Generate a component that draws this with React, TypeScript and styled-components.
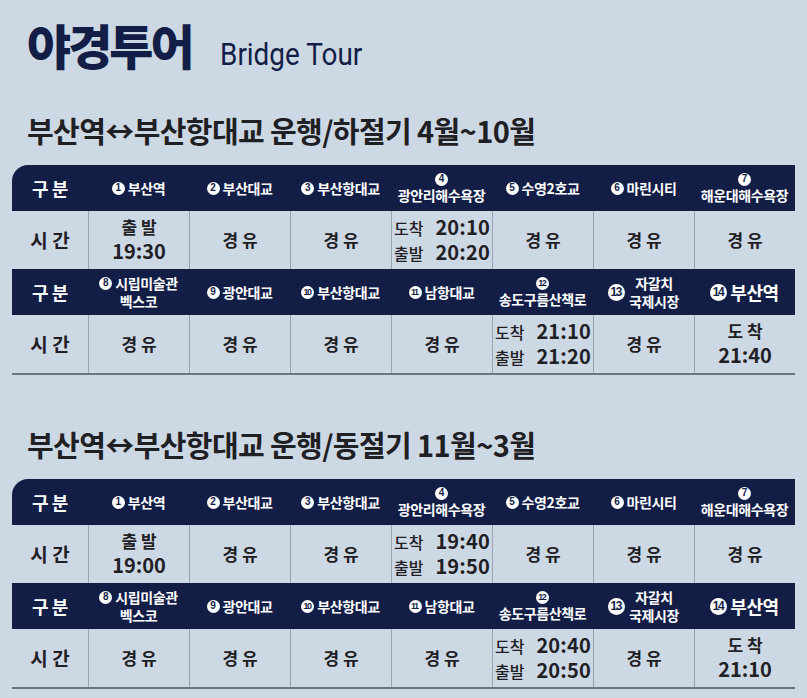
import React from "react";
import styled, { createGlobalStyle } from "styled-components";

const NAVY = "#131e47";
const INK = "#1f2024";

const GlobalStyle = createGlobalStyle`
  html, body {
    margin: 0;
    padding: 0;
    background: #cdd8e5;
  }
  body {
    font-family: "Noto Sans CJK KR", "Noto Sans", sans-serif;
    color: ${INK};
  }
`;

const Page = styled.div`
  width: 807px;
  height: 698px;
  overflow: hidden;
  box-sizing: border-box;
  padding: 14px 0 0 12px;
  background: #cdd8e5;
`;

const TitleRow = styled.div`
  display: flex;
  align-items: baseline;
  gap: 28px;
  padding-left: 15px;
  height: 66px;
  color: ${NAVY};
`;

const TitleKo = styled.h1`
  margin: 0;
  font-size: 48px;
  line-height: 60px;
  font-weight: 900;
  letter-spacing: -3px;
`;

const TitleEn = styled.span`
  display: inline-block;
  font-family: "Liberation Sans Narrow", "Roboto", sans-serif;
  font-size: 31px;
  font-weight: 400;
  transform: scaleX(0.9);
  transform-origin: left center;
`;

const Section = styled.section<{ $gap: number }>`
  margin-top: ${(p) => p.$gap}px;
`;

const SubTitle = styled.h2`
  margin: 0 0 15px 15px;
  font-size: 29px;
  line-height: 40px;
  font-weight: 700;
  letter-spacing: -0.6px;
  color: ${INK};
`;

const Grid = styled.div`
  display: grid;
  grid-template-columns: 76px repeat(7, 101px);
  grid-template-rows: 46px 58px 46px 58px;
  width: 783px;
  border-top-left-radius: 16px;
  overflow: hidden;
  border-bottom: 2px solid #6c7584;
`;

const HeadCell = styled.div<{ $big?: boolean }>`
  background: ${NAVY};
  color: #fff;
  display: flex;
  flex-direction: column;
  align-items: center;
  justify-content: center;
  font-size: ${(p) => (p.$big ? 18 : 14)}px;
  font-weight: 700;
  line-height: 18px;
  letter-spacing: -0.4px;
  white-space: nowrap;
`;

const DataCell = styled.div<{ $first?: boolean }>`
  display: flex;
  flex-direction: column;
  align-items: center;
  justify-content: center;
  border-left: ${(p) => (p.$first ? "none" : "1px solid #98a4b4")};
  font-weight: 700;
  color: ${INK};
  white-space: nowrap;
`;

const Label = styled.span<{ $size: number }>`
  font-size: ${(p) => p.$size}px;
  line-height: 1.3;
  font-weight: 700;
`;

const Line = styled.span`
  display: flex;
  align-items: center;
  gap: 3px;
`;

const Side = styled.span`
  display: flex;
  align-items: center;
  gap: 4px;
`;

const SideText = styled.span`
  display: flex;
  flex-direction: column;
  align-items: center;
`;

const Num = styled.span<{ $size: number; $two?: boolean }>`
  display: inline-flex;
  align-items: center;
  justify-content: center;
  width: ${(p) => p.$size}px;
  height: ${(p) => p.$size}px;
  border-radius: 50%;
  background: #fff;
  color: ${NAVY};
  font-family: "Liberation Sans", "Arial", sans-serif;
  font-weight: 700;
  font-size: ${(p) => Math.round(p.$size * (p.$two ? 0.7 : 0.8))}px;
  letter-spacing: ${(p) => (p.$two ? "-1.5px" : "0")};
  text-indent: ${(p) => (p.$two ? "-1.5px" : "0")};
  line-height: 1;
  flex-shrink: 0;
`;

const StopTime = styled.div`
  display: grid;
  grid-template-columns: auto auto;
  column-gap: 12px;
  align-items: baseline;
  line-height: 24px;
`;

const StopLabel = styled.span`
  font-size: 16px;
  font-weight: 500;
`;

const Clock = styled.span`
  font-size: 20px;
  font-weight: 700;
  letter-spacing: 0.2px;
`;

type Stop = {
  no: number;
  lines: string[];
  kind: "inline" | "stack" | "wrap" | "side" | "big";
};

type Slot =
  | { t: "via" }
  | { t: "dep"; time: string }
  | { t: "stop"; arr: string; dep: string }
  | { t: "arr"; time: string };

const firstStops: Stop[] = [
  { no: 1, lines: ["부산역"], kind: "inline" },
  { no: 2, lines: ["부산대교"], kind: "inline" },
  { no: 3, lines: ["부산항대교"], kind: "inline" },
  { no: 4, lines: ["광안리해수욕장"], kind: "stack" },
  { no: 5, lines: ["수영2호교"], kind: "inline" },
  { no: 6, lines: ["마린시티"], kind: "inline" },
  { no: 7, lines: ["해운대해수욕장"], kind: "stack" },
];

const secondStops: Stop[] = [
  { no: 8, lines: ["시립미술관", "벡스코"], kind: "wrap" },
  { no: 9, lines: ["광안대교"], kind: "inline" },
  { no: 10, lines: ["부산항대교"], kind: "inline" },
  { no: 11, lines: ["남항대교"], kind: "inline" },
  { no: 12, lines: ["송도구름산책로"], kind: "stack" },
  { no: 13, lines: ["자갈치", "국제시장"], kind: "side" },
  { no: 14, lines: ["부산역"], kind: "big" },
];

const via: Slot = { t: "via" };

const schedules = [
  {
    title: "부산역↔부산항대교 운행/하절기 4월~10월",
    first: [
      { t: "dep", time: "19:30" },
      via,
      via,
      { t: "stop", arr: "20:10", dep: "20:20" },
      via,
      via,
      via,
    ] as Slot[],
    second: [
      via,
      via,
      via,
      via,
      { t: "stop", arr: "21:10", dep: "21:20" },
      via,
      { t: "arr", time: "21:40" },
    ] as Slot[],
  },
  {
    title: "부산역↔부산항대교 운행/동절기 11월~3월",
    first: [
      { t: "dep", time: "19:00" },
      via,
      via,
      { t: "stop", arr: "19:40", dep: "19:50" },
      via,
      via,
      via,
    ] as Slot[],
    second: [
      via,
      via,
      via,
      via,
      { t: "stop", arr: "20:40", dep: "20:50" },
      via,
      { t: "arr", time: "21:10" },
    ] as Slot[],
  },
];

const Circle = ({ no, size }: { no: number; size: number }) => (
  <Num $size={size} $two={no > 9}>
    {no}
  </Num>
);

const StopHead = ({ stop }: { stop: Stop }) => {
  const { no, lines, kind } = stop;
  if (kind === "stack") {
    return (
      <HeadCell>
        <Circle no={no} size={13} />
        <span>{lines[0]}</span>
      </HeadCell>
    );
  }
  if (kind === "wrap") {
    return (
      <HeadCell>
        <Line>
          <Circle no={no} size={13} />
          {lines[0]}
        </Line>
        <span>{lines[1]}</span>
      </HeadCell>
    );
  }
  if (kind === "side") {
    return (
      <HeadCell>
        <Side>
          <Circle no={no} size={17} />
          <SideText>
            {lines.map((l) => (
              <span key={l}>{l}</span>
            ))}
          </SideText>
        </Side>
      </HeadCell>
    );
  }
  if (kind === "big") {
    return (
      <HeadCell $big>
        <Line>
          <Circle no={no} size={17} />
          {lines[0]}
        </Line>
      </HeadCell>
    );
  }
  return (
    <HeadCell>
      <Line>
        <Circle no={no} size={13} />
        {lines[0]}
      </Line>
    </HeadCell>
  );
};

const SlotCell = ({ slot }: { slot: Slot }) => {
  if (slot.t === "dep" || slot.t === "arr") {
    return (
      <DataCell>
        <Label $size={17}>{slot.t === "dep" ? "출 발" : "도 착"}</Label>
        <Label $size={20}>{slot.time}</Label>
      </DataCell>
    );
  }
  if (slot.t === "stop") {
    return (
      <DataCell>
        <StopTime>
          <StopLabel>도착</StopLabel>
          <Clock>{slot.arr}</Clock>
          <StopLabel>출발</StopLabel>
          <Clock>{slot.dep}</Clock>
        </StopTime>
      </DataCell>
    );
  }
  return (
    <DataCell>
      <Label $size={17}>경 유</Label>
    </DataCell>
  );
};

const ScheduleTable = ({ first, second }: { first: Slot[]; second: Slot[] }) => (
  <Grid>
    <HeadCell $big>구 분</HeadCell>
    {firstStops.map((s) => (
      <StopHead key={s.no} stop={s} />
    ))}
    <DataCell $first>
      <Label $size={19}>시 간</Label>
    </DataCell>
    {first.map((s, i) => (
      <SlotCell key={i} slot={s} />
    ))}
    <HeadCell $big>구 분</HeadCell>
    {secondStops.map((s) => (
      <StopHead key={s.no} stop={s} />
    ))}
    <DataCell $first>
      <Label $size={19}>시 간</Label>
    </DataCell>
    {second.map((s, i) => (
      <SlotCell key={i} slot={s} />
    ))}
  </Grid>
);

export default function App() {
  return (
    <>
      <GlobalStyle />
      <Page>
        <TitleRow>
          <TitleKo>야경투어</TitleKo>
          <TitleEn>Bridge Tour</TitleEn>
        </TitleRow>
        {schedules.map((s, i) => (
          <Section key={s.title} $gap={i === 0 ? 30 : 49}>
            <SubTitle>{s.title}</SubTitle>
            <ScheduleTable first={s.first} second={s.second} />
          </Section>
        ))}
      </Page>
    </>
  );
}
